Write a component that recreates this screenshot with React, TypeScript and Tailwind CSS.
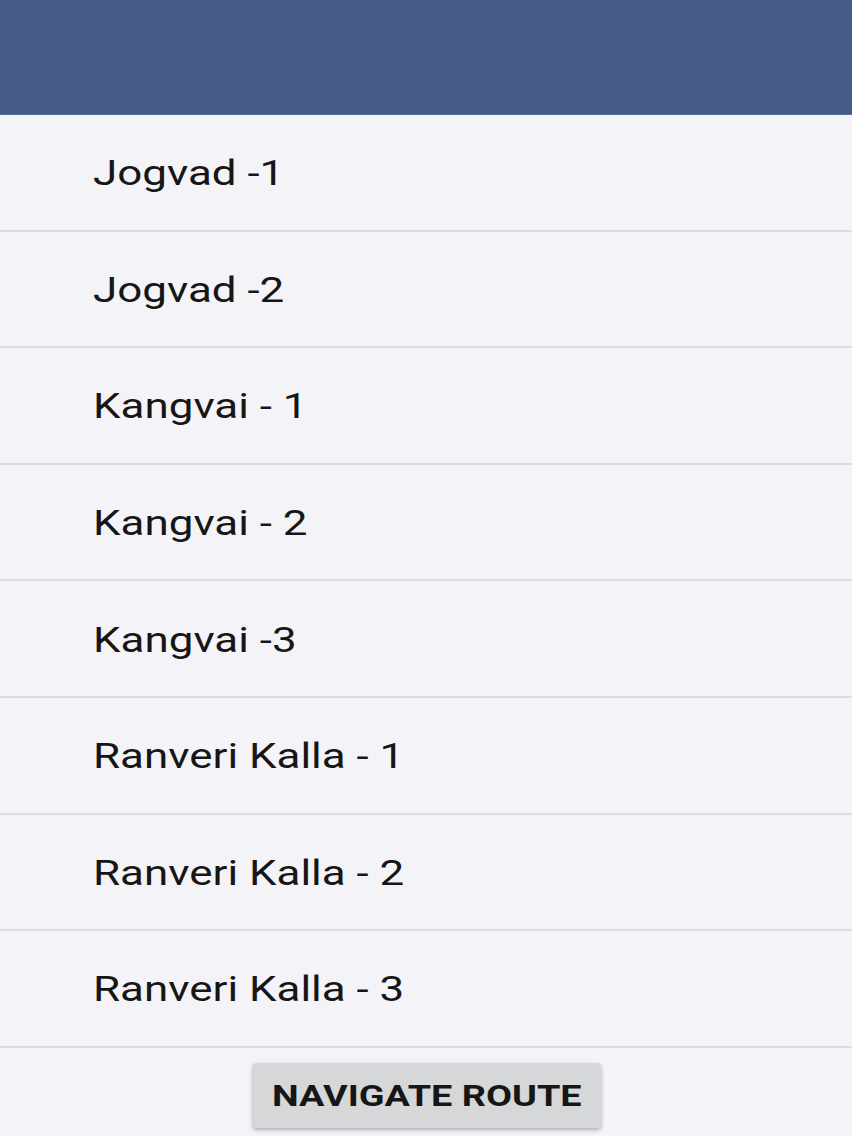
import React from 'react';

const stops = [
  'Jogvad -1',
  'Jogvad -2',
  'Kangvai - 1',
  'Kangvai - 2',
  'Kangvai -3',
  'Ranveri Kalla - 1',
  'Ranveri Kalla - 2',
  'Ranveri Kalla - 3',
];

export default function App() {
  return (
    <div className="flex flex-col w-[852px] h-[1136px] overflow-hidden bg-[#f4f3f7]" style={{ fontFamily: 'Roboto, "Noto Sans", sans-serif' }}>
      {/* Header */}
      <div className="h-[115px] shrink-0 bg-[#445b8a] border-b border-[#5a6f9a]" />

      {/* Stop list */}
      <div className="flex flex-col">
        {stops.map((name) => (
          <div key={name} className="h-[116.6px] box-border flex items-center pl-[93px] border-b-2 border-[#dcdbdf]">
            <span className="inline-block origin-left scale-x-[1.255] text-[35px] leading-none pt-[3px] text-[#161616]">{name}</span>
          </div>
        ))}
      </div>

      {/* Action */}
      <div className="flex justify-center pt-[15px] pl-[2px]">
        <button className="w-[348px] h-[65px] pt-[4px] rounded-[4px] bg-[#d6d7d8] shadow-[0_2px_4px_rgba(0,0,0,0.3)] text-[#161616]">
          <span className="inline-block scale-x-[1.26] text-[30px] font-bold leading-none">NAVIGATE ROUTE</span>
        </button>
      </div>
    </div>
  );
}
